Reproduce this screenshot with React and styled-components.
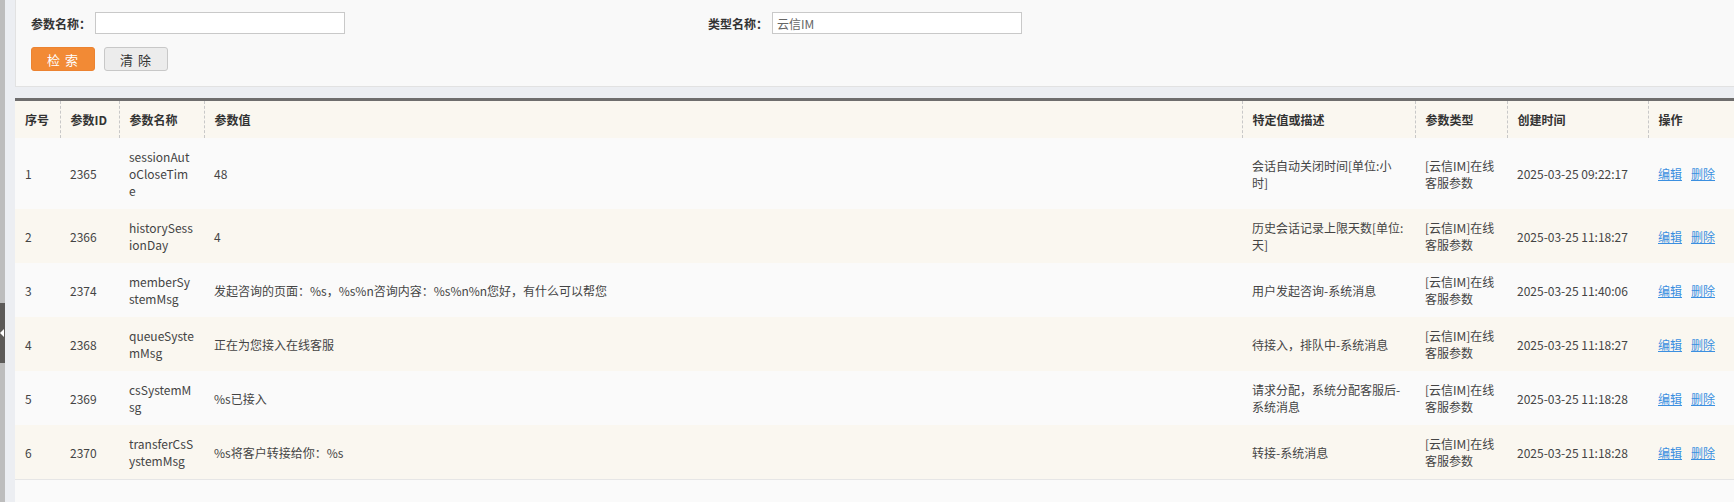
import React from 'react';
import styled, { createGlobalStyle } from 'styled-components';

const GlobalStyle = createGlobalStyle`
  html, body {
    margin: 0;
    padding: 0;
    background: #eceef2;
  }
  body {
    font-family: 'Microsoft YaHei', 'Noto Sans CJK SC', sans-serif;
    font-size: 12px;
    color: #444;
  }
`;

const Page = styled.div`
  display: flex;
  height: 502px;
  overflow: hidden;
`;

const SideStrip = styled.div`
  width: 5px;
  flex: none;
  background: #bdbdbd;
  display: flex;
  flex-direction: column;
`;

const CollapseHandle = styled.div`
  margin-top: 303px;
  height: 60px;
  background: #5c5a58;
  display: flex;
  align-items: center;
  &::after {
    content: '';
    border-style: solid;
    border-width: 4px 4px 4px 0;
    border-color: transparent #fff transparent transparent;
  }
`;

const Main = styled.div`
  flex: 1;
  padding-left: 10px;
  display: flex;
  flex-direction: column;
  min-width: 0;
`;

const SearchPanel = styled.div`
  background: #f9f9f9;
  border-left: 1px solid #e2e2e2;
  border-bottom: 1px solid #e2e2e2;
  padding: 12px 16px 15px 15px;
  display: flex;
  flex-direction: column;
  gap: 13px;
`;

const FieldRow = styled.div`
  display: grid;
  grid-template-columns: 677px 1fr;
  align-items: center;
`;

const Field = styled.div`
  display: flex;
  align-items: center;
  gap: 4px;
`;

const Label = styled.label`
  font-weight: 600;
  color: #333;
  font-size: 12px;
  white-space: nowrap;
`;

const Input = styled.input`
  box-sizing: border-box;
  width: 250px;
  height: 22px;
  border: 1px solid #c9c9c9;
  background: #fff;
  padding: 0 4px;
  font-family: inherit;
  font-size: 12px;
  color: #666;
  outline: none;
`;

const ButtonRow = styled.div`
  display: flex;
  gap: 9px;
`;

const Button = styled.button`
  box-sizing: border-box;
  width: 64px;
  height: 24px;
  border-radius: 3px;
  font-family: inherit;
  font-size: 13px;
  letter-spacing: 1px;
  cursor: pointer;
  border: 1px solid ${(p) => (p.$primary ? '#ec8331' : '#c8c8c8')};
  background: ${(p) => (p.$primary ? '#f28a35' : '#ececec')};
  color: ${(p) => (p.$primary ? '#fff' : '#333')};
`;

const TableWrap = styled.div`
  margin-top: 11px;
  flex: 1;
  background: #fafafa;
  border-top: 3px solid #6e6d6d;
`;

const Table = styled.table`
  width: 100%;
  table-layout: fixed;
  border-collapse: collapse;
  border-bottom: 1px solid #e6e6e6;
`;

const Th = styled.th`
  height: 37px;
  padding: 0 10px;
  text-align: left;
  font-weight: 700;
  color: #333;
  font-size: 12px;
  background: #faf7f0;
  & + & {
    border-left: 1px dashed #c8c8c8;
  }
`;

const Row = styled.tr`
  background: ${(p) => (p.$alt ? '#faf7f0' : '#fafafa')};
`;

const Td = styled.td`
  padding: 10px;
  line-height: 17px;
  vertical-align: middle;
  color: #444;
  word-break: ${(p) => (p.$breakAll ? 'break-all' : 'normal')};
  white-space: ${(p) => (p.$nowrap ? 'nowrap' : 'normal')};
`;

const Link = styled.a`
  color: #3b8fe0;
  text-decoration: underline;
  cursor: pointer;
  & + & {
    margin-left: 9px;
  }
`;

const columns = [
  { title: '序号', width: 45 },
  { title: '参数ID', width: 59 },
  { title: '参数名称', width: 85 },
  { title: '参数值' },
  { title: '特定值或描述', width: 173 },
  { title: '参数类型', width: 92 },
  { title: '创建时间', width: 141 },
  { title: '操作', width: 86 },
];

const rows = [
  {
    id: 2365,
    name: 'sessionAutoCloseTime',
    value: '48',
    desc: '会话自动关闭时间[单位:小时]',
    time: '2025-03-25 09:22:17',
  },
  {
    id: 2366,
    name: 'historySessionDay',
    value: '4',
    desc: '历史会话记录上限天数[单位:天]',
    time: '2025-03-25 11:18:27',
  },
  {
    id: 2374,
    name: 'memberSystemMsg',
    value: '发起咨询的页面：%s，%s%n咨询内容：%s%n%n您好，有什么可以帮您',
    desc: '用户发起咨询-系统消息',
    time: '2025-03-25 11:40:06',
  },
  {
    id: 2368,
    name: 'queueSystemMsg',
    value: '正在为您接入在线客服',
    desc: '待接入，排队中-系统消息',
    time: '2025-03-25 11:18:27',
  },
  {
    id: 2369,
    name: 'csSystemMsg',
    value: '%s已接入',
    desc: '请求分配，系统分配客服后-系统消息',
    time: '2025-03-25 11:18:28',
  },
  {
    id: 2370,
    name: 'transferCsSystemMsg',
    value: '%s将客户转接给你：%s',
    desc: '转接-系统消息',
    time: '2025-03-25 11:18:28',
  },
];

export default function App() {
  return (
    <>
      <GlobalStyle />
      <Page>
        <SideStrip>
          <CollapseHandle />
        </SideStrip>
        <Main>
          <SearchPanel>
            <FieldRow>
              <Field>
                <Label>参数名称：</Label>
                <Input defaultValue="" />
              </Field>
              <Field>
                <Label>类型名称：</Label>
                <Input defaultValue="云信IM" />
              </Field>
            </FieldRow>
            <ButtonRow>
              <Button $primary>检 索</Button>
              <Button>清 除</Button>
            </ButtonRow>
          </SearchPanel>
          <TableWrap>
            <Table>
              <colgroup>
                {columns.map((c) => (
                  <col key={c.title} style={c.width ? { width: c.width } : undefined} />
                ))}
              </colgroup>
              <thead>
                <tr>
                  {columns.map((c) => (
                    <Th key={c.title}>{c.title}</Th>
                  ))}
                </tr>
              </thead>
              <tbody>
                {rows.map((r, i) => (
                  <Row key={r.id} $alt={i % 2 === 1}>
                    <Td>{i + 1}</Td>
                    <Td>{r.id}</Td>
                    <Td $breakAll>{r.name}</Td>
                    <Td>{r.value}</Td>
                    <Td>{r.desc}</Td>
                    <Td>[云信IM]在线客服参数</Td>
                    <Td>{r.time}</Td>
                    <Td $nowrap>
                      <Link>编辑</Link>
                      <Link>删除</Link>
                    </Td>
                  </Row>
                ))}
              </tbody>
            </Table>
          </TableWrap>
        </Main>
      </Page>
    </>
  );
}
